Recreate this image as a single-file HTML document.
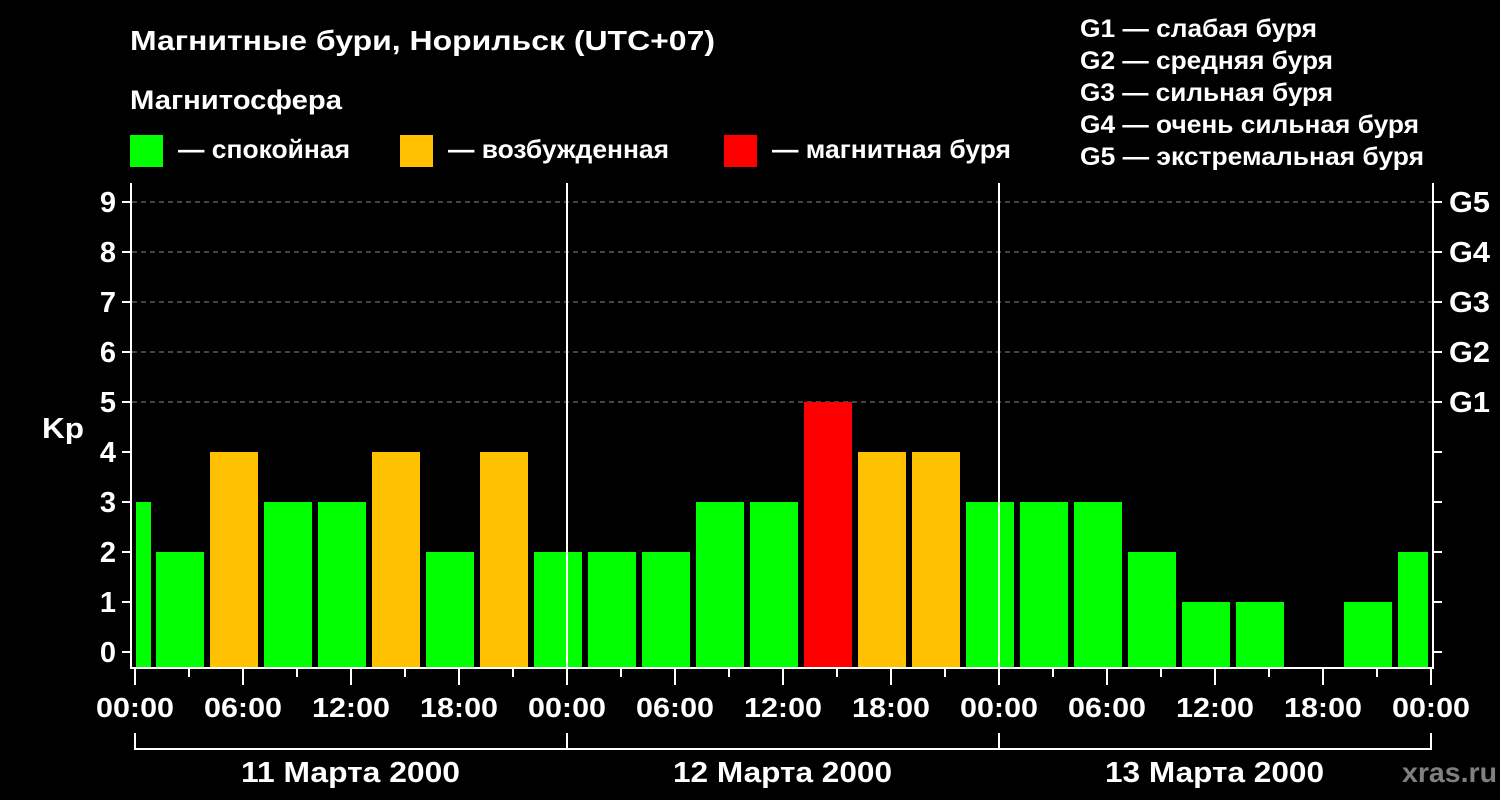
<!DOCTYPE html>
<html><head><meta charset="utf-8"><style>
html,body{margin:0;padding:0;background:#000;width:1500px;height:800px;overflow:hidden}
svg{display:block}
text{font-family:"Liberation Sans",Arial,sans-serif;font-weight:bold;fill:#fff}
</style></head><body>
<svg width="1500" height="800" viewBox="0 0 1500 800" xmlns="http://www.w3.org/2000/svg">
<rect width="1500" height="800" fill="#000"/>
<text x="130" y="50" font-size="28" textLength="585" lengthAdjust="spacingAndGlyphs">Магнитные бури, Норильск (UTC+07)</text>
<text x="130" y="109" font-size="27" textLength="212" lengthAdjust="spacingAndGlyphs">Магнитосфера</text>
<rect x="130" y="135" width="33" height="32" fill="#00ff00"/>
<text x="178" y="158" font-size="26" textLength="172" lengthAdjust="spacingAndGlyphs">— спокойная</text>
<rect x="400" y="135" width="33" height="32" fill="#ffc000"/>
<text x="448" y="158" font-size="26" textLength="221" lengthAdjust="spacingAndGlyphs">— возбужденная</text>
<rect x="724" y="135" width="33" height="32" fill="#ff0000"/>
<text x="772" y="158" font-size="26" textLength="239" lengthAdjust="spacingAndGlyphs">— магнитная буря</text>
<g font-size="25">
<text x="1080" y="37" textLength="237" lengthAdjust="spacingAndGlyphs">G1 — слабая буря</text>
<text x="1080" y="69" textLength="253" lengthAdjust="spacingAndGlyphs">G2 — средняя буря</text>
<text x="1080" y="101" textLength="253" lengthAdjust="spacingAndGlyphs">G3 — сильная буря</text>
<text x="1080" y="133" textLength="339" lengthAdjust="spacingAndGlyphs">G4 — очень сильная буря</text>
<text x="1080" y="165" textLength="344" lengthAdjust="spacingAndGlyphs">G5 — экстремальная буря</text>
</g>
<g stroke="#888" stroke-width="1" stroke-dasharray="5,4">
<line x1="132" y1="202" x2="1432" y2="202"/>
<line x1="132" y1="252" x2="1432" y2="252"/>
<line x1="132" y1="302" x2="1432" y2="302"/>
<line x1="132" y1="352" x2="1432" y2="352"/>
<line x1="132" y1="402" x2="1432" y2="402"/>
</g>
<g>
<rect x="136" y="502" width="15" height="166" fill="#00ff00"/>
<rect x="156" y="552" width="48" height="116" fill="#00ff00"/>
<rect x="210" y="452" width="48" height="216" fill="#ffc000"/>
<rect x="264" y="502" width="48" height="166" fill="#00ff00"/>
<rect x="318" y="502" width="48" height="166" fill="#00ff00"/>
<rect x="372" y="452" width="48" height="216" fill="#ffc000"/>
<rect x="426" y="552" width="48" height="116" fill="#00ff00"/>
<rect x="480" y="452" width="48" height="216" fill="#ffc000"/>
<rect x="534" y="552" width="48" height="116" fill="#00ff00"/>
<rect x="588" y="552" width="48" height="116" fill="#00ff00"/>
<rect x="642" y="552" width="48" height="116" fill="#00ff00"/>
<rect x="696" y="502" width="48" height="166" fill="#00ff00"/>
<rect x="750" y="502" width="48" height="166" fill="#00ff00"/>
<rect x="804" y="402" width="48" height="266" fill="#ff0000"/>
<rect x="858" y="452" width="48" height="216" fill="#ffc000"/>
<rect x="912" y="452" width="48" height="216" fill="#ffc000"/>
<rect x="966" y="502" width="48" height="166" fill="#00ff00"/>
<rect x="1020" y="502" width="48" height="166" fill="#00ff00"/>
<rect x="1074" y="502" width="48" height="166" fill="#00ff00"/>
<rect x="1128" y="552" width="48" height="116" fill="#00ff00"/>
<rect x="1182" y="602" width="48" height="66" fill="#00ff00"/>
<rect x="1236" y="602" width="48" height="66" fill="#00ff00"/>
<rect x="1344" y="602" width="48" height="66" fill="#00ff00"/>
<rect x="1398" y="552" width="30" height="116" fill="#00ff00"/>
</g>
<g stroke="#fff" stroke-width="2">
<line x1="567" y1="183" x2="567" y2="668"/>
<line x1="999" y1="183" x2="999" y2="668"/>
</g>
<g stroke="#fff" stroke-width="2" fill="none">
<polyline points="131,668 131,183"/>
<line x1="130" y1="668" x2="1434" y2="668"/>
<line x1="1433" y1="183" x2="1433" y2="669"/>
</g>
<g stroke="#fff" stroke-width="2">
<line x1="122" y1="202" x2="131" y2="202"/><line x1="122" y1="252" x2="131" y2="252"/>
<line x1="122" y1="302" x2="131" y2="302"/><line x1="122" y1="352" x2="131" y2="352"/>
<line x1="122" y1="402" x2="131" y2="402"/><line x1="122" y1="452" x2="131" y2="452"/>
<line x1="122" y1="502" x2="131" y2="502"/><line x1="122" y1="552" x2="131" y2="552"/>
<line x1="122" y1="602" x2="131" y2="602"/><line x1="122" y1="652" x2="131" y2="652"/>
<line x1="1433" y1="202" x2="1442" y2="202"/><line x1="1433" y1="252" x2="1442" y2="252"/>
<line x1="1433" y1="302" x2="1442" y2="302"/><line x1="1433" y1="352" x2="1442" y2="352"/>
<line x1="1433" y1="402" x2="1442" y2="402"/><line x1="1433" y1="452" x2="1442" y2="452"/>
<line x1="1433" y1="502" x2="1442" y2="502"/><line x1="1433" y1="552" x2="1442" y2="552"/>
<line x1="1433" y1="602" x2="1442" y2="602"/><line x1="1433" y1="652" x2="1442" y2="652"/>
</g>
<g font-size="29" text-anchor="end">
<text x="116" y="212">9</text><text x="116" y="262">8</text><text x="116" y="312">7</text>
<text x="116" y="362">6</text><text x="116" y="412">5</text><text x="116" y="462">4</text>
<text x="116" y="512">3</text><text x="116" y="562">2</text><text x="116" y="612">1</text>
<text x="116" y="662">0</text>
</g>
<text x="42" y="438" font-size="29" textLength="42" lengthAdjust="spacingAndGlyphs">Kp</text>
<g font-size="29">
<text x="1449" y="212" textLength="41" lengthAdjust="spacingAndGlyphs">G5</text>
<text x="1449" y="262" textLength="41" lengthAdjust="spacingAndGlyphs">G4</text>
<text x="1449" y="312" textLength="41" lengthAdjust="spacingAndGlyphs">G3</text>
<text x="1449" y="362" textLength="41" lengthAdjust="spacingAndGlyphs">G2</text>
<text x="1449" y="412" textLength="41" lengthAdjust="spacingAndGlyphs">G1</text>
</g>
<g stroke="#fff" stroke-width="2">
<line x1="135" y1="668" x2="135" y2="685"/><line x1="189" y1="668" x2="189" y2="677"/>
<line x1="243" y1="668" x2="243" y2="685"/><line x1="297" y1="668" x2="297" y2="677"/>
<line x1="351" y1="668" x2="351" y2="685"/><line x1="405" y1="668" x2="405" y2="677"/>
<line x1="459" y1="668" x2="459" y2="685"/><line x1="513" y1="668" x2="513" y2="677"/>
<line x1="567" y1="668" x2="567" y2="685"/><line x1="621" y1="668" x2="621" y2="677"/>
<line x1="675" y1="668" x2="675" y2="685"/><line x1="729" y1="668" x2="729" y2="677"/>
<line x1="783" y1="668" x2="783" y2="685"/><line x1="837" y1="668" x2="837" y2="677"/>
<line x1="891" y1="668" x2="891" y2="685"/><line x1="945" y1="668" x2="945" y2="677"/>
<line x1="999" y1="668" x2="999" y2="685"/><line x1="1053" y1="668" x2="1053" y2="677"/>
<line x1="1107" y1="668" x2="1107" y2="685"/><line x1="1161" y1="668" x2="1161" y2="677"/>
<line x1="1215" y1="668" x2="1215" y2="685"/><line x1="1269" y1="668" x2="1269" y2="677"/>
<line x1="1323" y1="668" x2="1323" y2="685"/><line x1="1377" y1="668" x2="1377" y2="677"/>
<line x1="1431" y1="668" x2="1431" y2="685"/>
</g>
<g font-size="28">
<text x="96" y="717" textLength="78" lengthAdjust="spacingAndGlyphs">00:00</text>
<text x="204" y="717" textLength="78" lengthAdjust="spacingAndGlyphs">06:00</text>
<text x="312" y="717" textLength="78" lengthAdjust="spacingAndGlyphs">12:00</text>
<text x="420" y="717" textLength="78" lengthAdjust="spacingAndGlyphs">18:00</text>
<text x="528" y="717" textLength="78" lengthAdjust="spacingAndGlyphs">00:00</text>
<text x="636" y="717" textLength="78" lengthAdjust="spacingAndGlyphs">06:00</text>
<text x="744" y="717" textLength="78" lengthAdjust="spacingAndGlyphs">12:00</text>
<text x="852" y="717" textLength="78" lengthAdjust="spacingAndGlyphs">18:00</text>
<text x="960" y="717" textLength="78" lengthAdjust="spacingAndGlyphs">00:00</text>
<text x="1068" y="717" textLength="78" lengthAdjust="spacingAndGlyphs">06:00</text>
<text x="1176" y="717" textLength="78" lengthAdjust="spacingAndGlyphs">12:00</text>
<text x="1284" y="717" textLength="78" lengthAdjust="spacingAndGlyphs">18:00</text>
<text x="1392" y="717" textLength="78" lengthAdjust="spacingAndGlyphs">00:00</text>
</g>
<g stroke="#fff" stroke-width="2" fill="none">
<line x1="134" y1="749" x2="1432" y2="749"/>
<line x1="135" y1="733" x2="135" y2="750"/>
<line x1="567" y1="733" x2="567" y2="750"/>
<line x1="999" y1="733" x2="999" y2="750"/>
<line x1="1431" y1="733" x2="1431" y2="750"/>
</g>
<g font-size="29">
<text x="241" y="782" textLength="219" lengthAdjust="spacingAndGlyphs">11 Марта 2000</text>
<text x="673" y="782" textLength="219" lengthAdjust="spacingAndGlyphs">12 Марта 2000</text>
<text x="1105" y="782" textLength="219" lengthAdjust="spacingAndGlyphs">13 Марта 2000</text>
</g>
<text x="1402" y="782" font-size="28" textLength="95" lengthAdjust="spacingAndGlyphs" style="fill:#808080">xras.ru</text>
</svg>
</body></html>
